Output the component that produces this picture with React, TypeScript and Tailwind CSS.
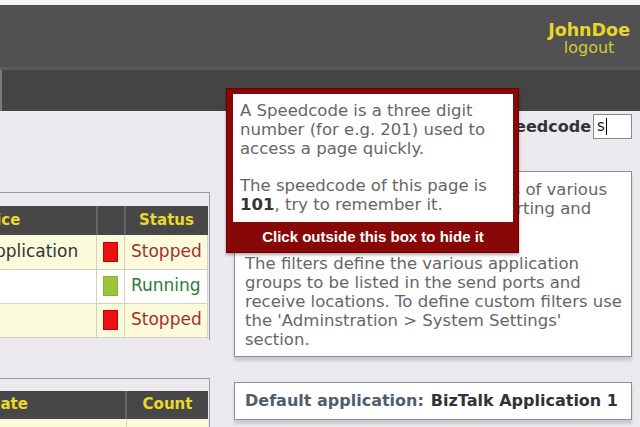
const statusRows = [
  { name: 'BizTalk Application', status: 'Stopped', bg: 'bg-[#fbfbdc]' },
  { name: 'EDI', status: 'Running', bg: 'bg-white' },
  { name: 'Orders', status: 'Stopped', bg: 'bg-[#fbfbdc]' },
];

function StatusCell({ status }: { status: string }) {
  const running = status === 'Running';
  return (
    <>
      <td className="border border-[#d2d2c4] border-t-0 px-0">
        <div className="flex justify-center">
          <span
            className={
              running
                ? 'block w-[15px] h-[20px] bg-[#9cc43c] border border-[#8ab030]'
                : 'block w-[15px] h-[20px] bg-[#ec1111] border border-[#c00]'
            }
          />
        </div>
      </td>
      <td
        className={
          running
            ? 'border border-[#d2d2c4] border-t-0 pl-[6px] text-[#2f7a3c]'
            : 'border border-[#d2d2c4] border-t-0 pl-[6px] text-[#a3302b]'
        }
      >
        {status}
      </td>
    </>
  );
}

export default function App() {
  return (
    <div className="relative w-[640px] h-[427px] overflow-hidden bg-[#eceaee] font-['DejaVu_Sans',Verdana,sans-serif]">
      {/* Top bars */}
      <div className="h-[5px] bg-[#f3f3f3]" />
      <div className="h-[62px] bg-[#515151] flex items-center justify-end pr-[10px] pt-[5px]">
        <div className="flex flex-col items-center leading-[17px]">
          <span className="font-bold text-[17.5px] text-[#e8d62a]">JohnDoe</span>
          <span className="text-[16px] text-[#d6c83a]">logout</span>
        </div>
      </div>
      <div className="h-[3px] bg-[#5b5b5b]" />
      <div className="h-[41px] bg-[#444444] border-l-2 border-[#7a7a7e]" />

      {/* Content */}
      <div className="flex">
        {/* Left column, scrolled off to the left */}
        <div className="w-[210px] shrink-0 overflow-hidden flex justify-end">
          <div className="w-[360px] shrink-0 flex flex-col">
            <div className="mt-[81px] border-t border-r border-[#9a9a9e] pt-[13px] pr-[1px] pb-[2px]">
              <table className="w-full border-collapse table-fixed text-[17px]">
                <colgroup>
                  <col />
                  <col className="w-[28px]" />
                  <col className="w-[83px]" />
                </colgroup>
                <thead>
                  <tr className="h-[29px] bg-[#474747] text-[#e8d92c] font-bold text-[15px]">
                    <th className="border-r-2 border-[#666] text-left pl-[108px]">Service</th>
                    <th className="border-r-2 border-[#666]" />
                    <th className="text-center">Status</th>
                  </tr>
                </thead>
                <tbody>
                  {statusRows.map((row) => (
                    <tr key={row.name} className={`h-[34px] ${row.bg}`}>
                      <td className="border border-[#d2d2c4] border-t-0 border-l-0 pl-[70px] text-[#333] whitespace-nowrap">
                        {row.name}
                      </td>
                      <StatusCell status={row.status} />
                    </tr>
                  ))}
                </tbody>
              </table>
            </div>

            <div className="mt-[38px] border-t border-r border-[#9a9a9e] pt-[12px] pr-[1px]">
              <table className="w-full border-collapse table-fixed text-[15px]">
                <colgroup>
                  <col />
                  <col className="w-[82px]" />
                </colgroup>
                <thead>
                  <tr className="h-[28px] bg-[#474747] text-[#e8d92c] font-bold">
                    <th className="border-r-2 border-[#666] text-left pl-[138px]">Date</th>
                    <th className="text-center">Count</th>
                  </tr>
                </thead>
                <tbody>
                  <tr className="h-[30px] bg-[#fbfbdc]">
                    <td className="border-r border-[#d2d2c4]" />
                    <td />
                  </tr>
                </tbody>
              </table>
            </div>
          </div>
        </div>

        {/* Right column */}
        <div className="w-[398px] ml-[24px] shrink-0 flex flex-col">
          <div className="mt-[3px] flex items-center justify-end gap-[2px]">
            <span className="font-bold text-[16px] text-[#333]">Speedcode</span>
            <div className="w-[39px] h-[25px] bg-white border border-[#8a8a8a] flex items-center pl-[3px] text-[15px] text-[#222]">
              s<span className="ml-[1px] w-px h-[17px] bg-black" />
            </div>
          </div>

          <div className="mt-[32px] bg-white border border-[#8e8e92] px-[10px] pt-[8px] pb-[7px] text-[16.5px] leading-[19px] text-[#666] whitespace-nowrap shadow-[0_4px_3px_rgba(0,0,0,0.14)]">
            <p>
              This page displays the live status of various
              <br />
              the artifacts for monitoring, reporting and
              <br />
              alerting.
            </p>
            <p className="mt-[17px]">
              The filters define the various application
              <br />
              groups to be listed in the send ports and
              <br />
              receive locations. To define custom filters use
              <br />
              the 'Adminstration &gt; System Settings'
              <br />
              section.
            </p>
          </div>

          <div className="mt-[25px] h-[38px] bg-white border border-[#8e8e92] flex items-center px-[10px] text-[16px] font-bold whitespace-nowrap shadow-[0_4px_3px_rgba(0,0,0,0.14)]">
            <span className="text-[#4f5d6f]">Default application:</span>
            <span className="ml-[7px] text-[#333]">BizTalk Application 1</span>
          </div>
        </div>
      </div>

      {/* Speedcode help popup */}
      <div className="absolute left-[226px] top-[88px] w-[293px] bg-[#880808] border border-[#6a0000] pl-[6px] pr-[5px] pt-[5px] shadow-[0_2px_3px_rgba(0,0,0,0.3)]">
        <div className="bg-white px-[7px] pt-[7px] pb-[8px] text-[16.5px] leading-[19px] text-[#666] whitespace-nowrap">
          <p>
            A Speedcode is a three digit
            <br />
            number (for e.g. 201) used to
            <br />
            access a page quickly.
          </p>
          <p className="mt-[18px]">
            The speedcode of this page is
            <br />
            <b className="text-[#333]">101</b>, try to remember it.
          </p>
        </div>
        <div className="h-[30px] flex items-center justify-center font-['Liberation_Sans',Arial,sans-serif] font-bold text-[15px] text-white">
          Click outside this box to hide it
        </div>
      </div>
    </div>
  );
}
